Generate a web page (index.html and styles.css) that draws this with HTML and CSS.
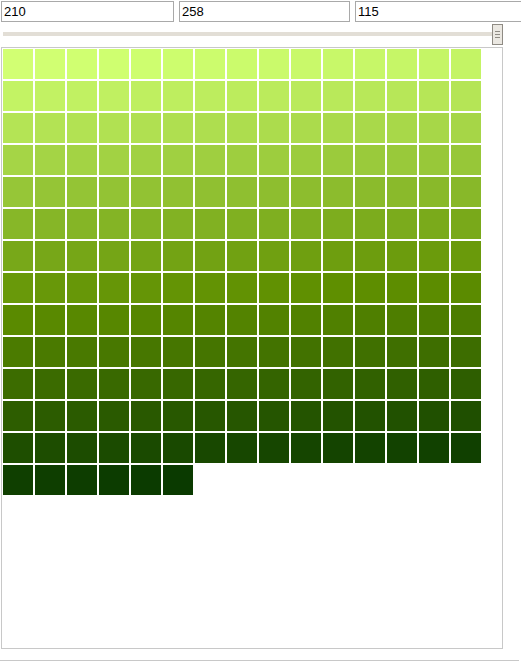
FILE: index.html
```html
<!DOCTYPE html>
<html>
<head>
<meta charset="utf-8">
<link rel="stylesheet" href="styles.css">
</head>
<body>
<div class="inputs">
  <input class="field field-a" type="text" value="210">
  <input class="field field-b" type="text" value="258">
  <input class="field field-c" type="text" value="115">
</div>
<div class="slider">
  <div class="track"></div>
  <div class="thumb"><span></span><span></span><span></span></div>
</div>
<div class="grid" id="grid"></div>
<div class="rule"></div>
<script src="script.js"></script>
</body>
</html>
```

FILE: styles.css
```css
html, body {
  margin: 0;
  padding: 0;
  background: #ffffff;
  overflow: hidden;
  font-family: "Liberation Sans", Arial, sans-serif;
}
.inputs {
  display: flex;
  gap: 5px;
  padding: 1px 0 0 1px;
  white-space: nowrap;
}
.field {
  flex: none;
  box-sizing: border-box;
  width: 173px;
  height: 21px;
  margin: 0;
  padding: 0 2px;
  border: 1px solid #a9a9a9;
  font-family: "Liberation Sans", Arial, sans-serif;
  font-size: 13px;
  color: #000;
  background: #fff;
  outline: none;
}
.field-b { width: 171px; }
.field-c { width: 180px; }
.slider {
  position: relative;
  height: 24px;
  margin-top: 1px;
}
.track {
  position: absolute;
  left: 3px;
  top: 9px;
  width: 493px;
  height: 4px;
  background: #e2ded6;
}
.thumb {
  position: absolute;
  left: 492px;
  top: 1px;
  box-sizing: border-box;
  width: 11px;
  height: 21px;
  border: 1px solid #8f8b84;
  background: #ebe8e2;
  display: flex;
  flex-direction: column;
  align-items: center;
  justify-content: center;
  gap: 2px;
}
.thumb span {
  display: block;
  width: 5px;
  height: 1px;
  background: #8f8b84;
}
.grid {
  box-sizing: border-box;
  width: 502px;
  height: 602px;
  margin-left: 1px;
  border: 1px solid #c8c8c8;
  padding: 1px 0 0 1px;
  display: flex;
  flex-wrap: wrap;
  align-content: flex-start;
}
.cell {
  width: 30px;
  height: 30px;
  margin: 0 2px 2px 0;
}
.rule {
  margin-top: 11px;
  width: 519px;
  border-top: 1px solid #c8c8c8;
}
```

FILE: script.js
```js
var grid = document.getElementById('grid');
function clamp(v) { return Math.max(0, Math.min(255, v)); }
for (var i = 0; i <= 200; i++) {
  var d = document.createElement('div');
  d.className = 'cell';
  d.style.background = 'rgb(' + clamp(210 - i) + ',' + clamp(258 - i) + ',' + clamp(115 - i) + ')';
  grid.appendChild(d);
}
```
